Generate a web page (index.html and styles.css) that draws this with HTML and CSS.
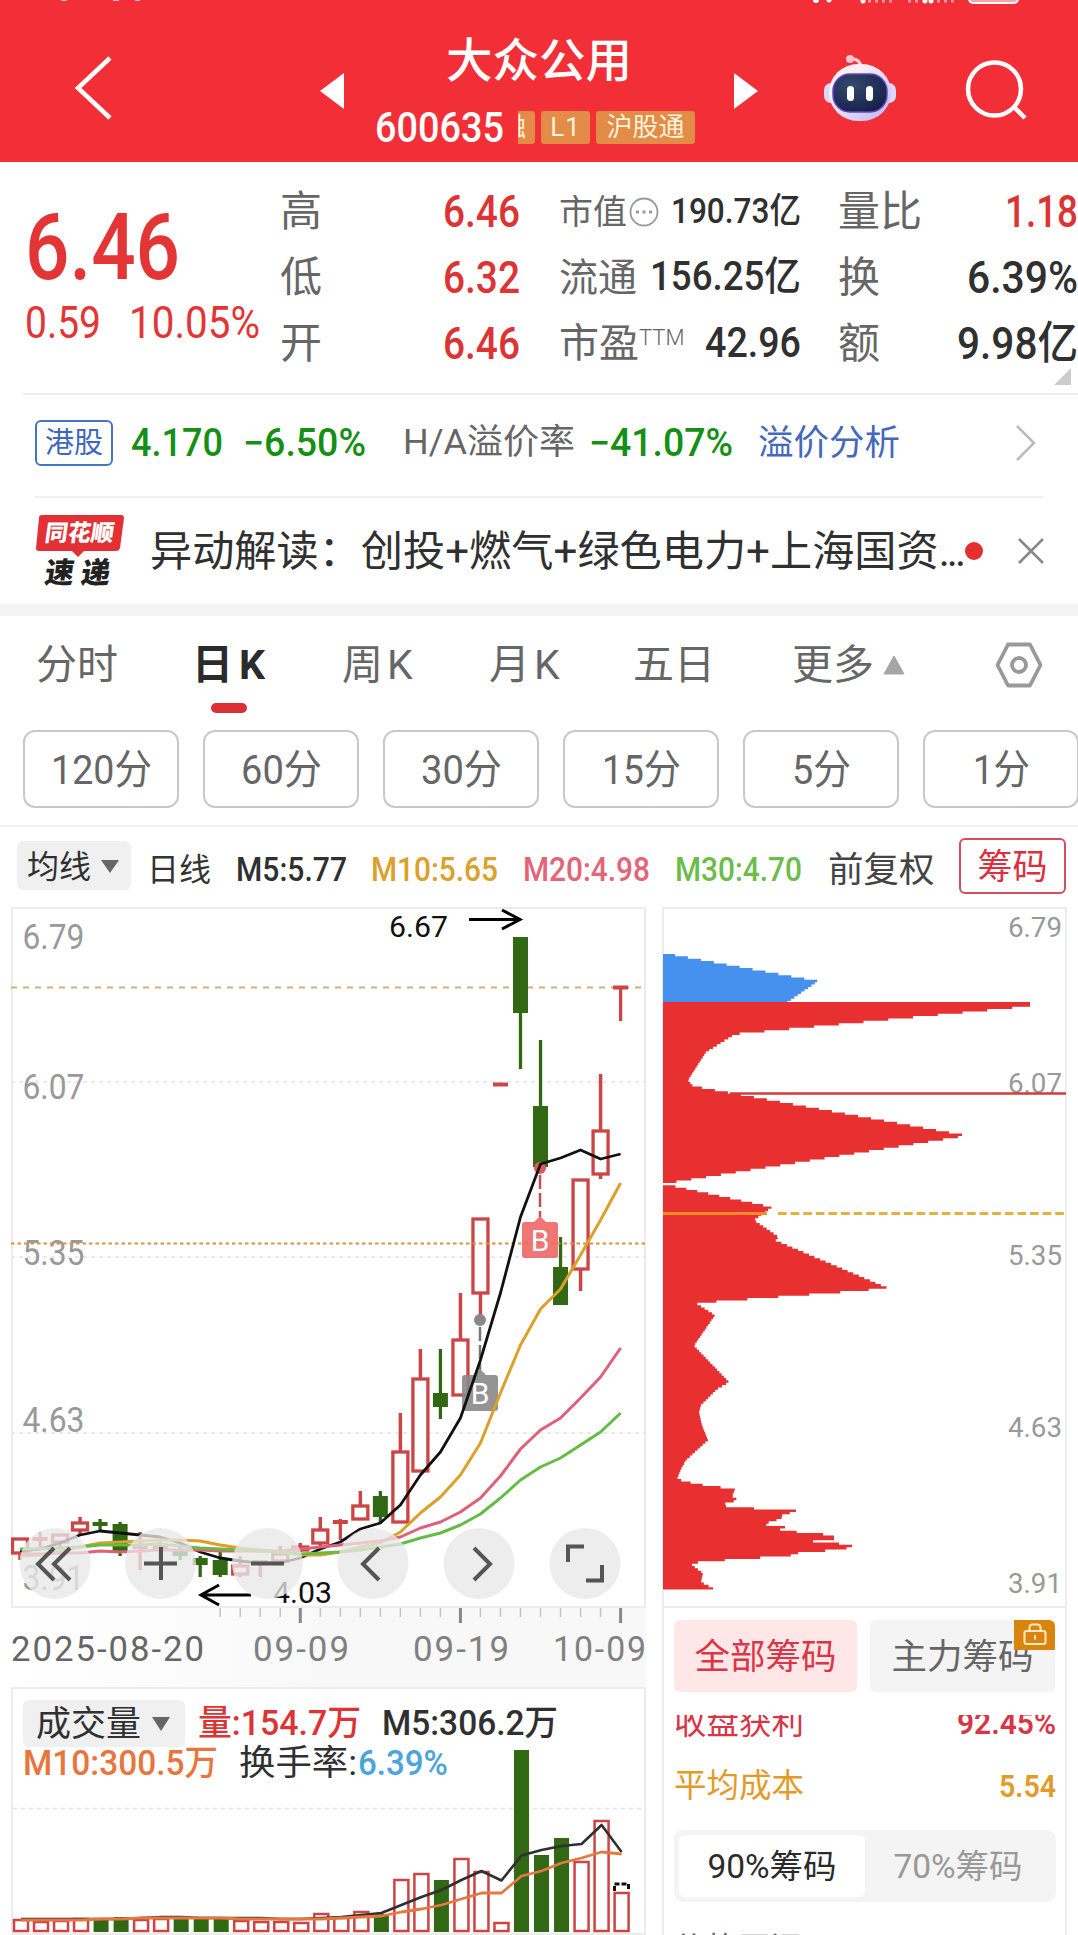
FILE: index.html
```html
<!DOCTYPE html>
<html lang="zh-CN">
<head>
<meta charset="utf-8">
<title>大众公用 600635</title>
<link rel="stylesheet" href="styles.css">
</head>
<body>

  <header class="topbar">
    <svg class="status" width="1078" height="6" viewBox="0 0 1078 6">
      <path d="M61 0h6M113 0h6M135 0h5" stroke="#ffb9bc" stroke-width="2"/>
      <circle cx="816" cy="0" r="3" fill="#fff"/><circle cx="829" cy="0" r="2.5" fill="#fff"/>
      <circle cx="863" cy="1" r="2.5" fill="#fff"/><circle cx="925" cy="1" r="2.5" fill="#fff"/><circle cx="931" cy="1" r="2.5" fill="#fff"/>
      <path d="M868 1h24M908 1h12M937 1h20" stroke="#f99" stroke-width="3" stroke-dasharray="3 4"/>
      <rect x="969" y="-12" width="49" height="15" rx="4" fill="#f9a5a8" stroke="#fff" stroke-width="2"/>
    </svg>
    <svg class="back" width="40" height="68" viewBox="0 0 40 68"><path d="M36 4L4 34l32 30" fill="none" stroke="#fff" stroke-width="4.5"/></svg>
    <svg class="prev" width="24" height="36" viewBox="0 0 24 36"><path d="M24 0v36L0 18z" fill="#fff"/></svg>
    <div class="title">
      <h1>大众公用</h1>
      <div class="code">
        <b class="fit" data-w="129">600635</b>
        <span class="tag cut"><i>融</i></span>
        <span class="tag l1">L1</span>
        <span class="tag hgt">沪股通</span>
      </div>
    </div>
    <svg class="next" width="24" height="36" viewBox="0 0 24 36"><path d="M0 0v36l24-18z" fill="#fff"/></svg>
    <svg class="robot" width="74" height="70" viewBox="0 0 74 70">
      <defs>
        <linearGradient id="shell" x1="0" y1="0" x2="1" y2="1"><stop offset="0.3" stop-color="#fbeef6"/><stop offset="1" stop-color="#b9b5f2"/></linearGradient>
        <radialGradient id="face" cx="0.35" cy="0.3" r="0.8"><stop offset="0" stop-color="#35486e"/><stop offset="1" stop-color="#141f48"/></radialGradient>
      </defs>
      <path d="M27 6q10-1 11 8" fill="none" stroke="#fbd3dc" stroke-width="3"/>
      <circle cx="27" cy="6" r="4" fill="#fbc3cb"/>
      <rect x="1" y="30" width="72" height="20" rx="7" fill="#dcd6f7"/>
      <rect x="6" y="11" width="62" height="57" rx="29" fill="url(#shell)"/>
      <rect x="10" y="21" width="54" height="38" rx="17" fill="url(#face)" stroke="#6345c4" stroke-width="1.5"/>
      <rect x="24" y="33" width="7" height="15" rx="3.5" fill="#fff"/>
      <rect x="43" y="33" width="7" height="15" rx="3.5" fill="#fff"/>
    </svg>
    <svg class="search" width="64" height="64" viewBox="0 0 64 64"><circle cx="30.500" cy="31" r="26.500" fill="none" stroke="#fff" stroke-width="4.500"/><path d="M50 49l11 11" stroke="#fff" stroke-width="4.500"/></svg>
  </header>

  <section class="stats">
    <div class="price">
      <div class="big"><span class="fit" data-w="155">6.46</span></div>
      <div class="change"><span class="fit" data-w="76">0.59</span><span class="fit" data-w="131">10.05%</span></div>
    </div>
    <div class="lab">高</div><div class="val red"><span class="fit" data-w="77">6.46</span></div>
    <div class="lab cap">市值<svg width="30" height="30" viewBox="0 0 30 30"><circle cx="15" cy="15" r="13.500" fill="none" stroke="#999" stroke-width="1.800"/><path d="M7 15h3M13.500 15h3M20 15h3" stroke="#999" stroke-width="3"/></svg></div>
    <div class="val v35"><span class="fit" data-w="130">190.73亿</span></div>
    <div class="lab">量比</div><div class="val red"><span class="fit" data-w="73">1.18</span></div>

    <div class="lab">低</div><div class="val red"><span class="fit" data-w="77">6.32</span></div>
    <div class="lab l39">流通</div><div class="val v40"><span class="fit" data-w="151">156.25亿</span></div>
    <div class="lab">换</div><div class="val"><span class="fit" data-w="111">6.39%</span></div>

    <div class="lab">开</div><div class="val red"><span class="fit" data-w="77">6.46</span></div>
    <div class="lab l40">市盈<sup>TTM</sup></div><div class="val v42"><span class="fit" data-w="96">42.96</span></div>
    <div class="lab">额</div><div class="val"><span class="fit" data-w="121">9.98亿</span></div>
    <svg class="corner" width="17" height="17" viewBox="0 0 17 17"><path d="M17 0v17H0z" fill="#ccc"/></svg>
  </section>

  <section class="hk">
    <span class="hk-tag">港股</span>
    <b class="fit" data-w="92">4.170</b>
    <b class="fit" data-w="123">−6.50%</b>
    <span class="ha fit" data-w="172">H/A溢价率</span>
    <b class="fit" data-w="144">−41.07%</b>
    <span class="link">溢价分析</span>
    <svg width="22" height="38" viewBox="0 0 22 38"><path d="M2 2l17 17L2 36" fill="none" stroke="#bbb" stroke-width="2.500"/></svg>
  </section>

  <section class="news">
    <div class="logo">
      <svg width="90" height="44" viewBox="0 0 90 44"><path d="M7 1h79q3 0 3 3l-4 30q-1 3-4 3H49l-6 6-6-6H4q-3 0-3-3L4 4q0-3 3-3z" fill="#e23035"/></svg>
      <span class="logo-a">同花顺</span>
      <span class="logo-b">速 递</span>
    </div>
    <p><span class="fit" data-w="813">异动解读：创投+燃气+绿色电力+上海国资<i class="dots">...</i></span></p>
    <i class="dot"></i>
    <svg width="26" height="26" viewBox="0 0 26 26"><path d="M1 1l24 24M25 1L1 25" stroke="#888" stroke-width="2.500"/></svg>
  </section>

  <nav class="tabs">
    <span>分时</span>
    <span class="active">日<em>K</em></span>
    <span>周<em>K</em></span>
    <span>月<em>K</em></span>
    <span>五日</span>
    <span class="more">更多<svg width="22" height="20" viewBox="0 0 22 20"><path d="M11 1l10 18H1z" fill="#a5a5a5" stroke="#a5a5a5"/></svg></span>
    <svg width="48" height="46" viewBox="0 0 48 46"><path d="M13 2.500h22L45.500 23 35 43.500H13L2.500 23z" fill="none" stroke="#999" stroke-width="3.800" stroke-linejoin="round"/><circle cx="24" cy="23" r="7" fill="none" stroke="#999" stroke-width="3.800"/></svg>
  </nav>

  <div class="minutes">
    <span><i class="fit" data-w="101">120分</i></span>
    <span><i class="fit" data-w="81">60分</i></span>
    <span><i class="fit" data-w="81">30分</i></span>
    <span><i class="fit" data-w="79">15分</i></span>
    <span><i class="fit" data-w="59">5分</i></span>
    <span><i class="fit" data-w="57">1分</i></span>
  </div>

  <div class="ma">
    <span class="pick">均线<svg width="18" height="13" viewBox="0 0 18 13"><path d="M0 0h18L9 13z" fill="#666"/></svg></span>
    <span class="day">日线</span>
    <b class="fit" data-w="111">M5:5.77</b>
    <b class="fit c10" data-w="127">M10:5.65</b>
    <b class="fit c20" data-w="127">M20:4.98</b>
    <b class="fit c30" data-w="127">M30:4.70</b>
    <span class="fq">前复权</span>
    <span class="chip-btn">筹码</span>
  </div>

  <main class="board">
    <div class="left">
      <svg id="kline" width="635" height="701" viewBox="12 907 635 701"></svg>
      <div class="axis">
        <svg id="ticks" width="635" height="18" viewBox="12 1608 635 18"></svg>
        <div class="dates">
          <span class="fit first" data-w="195">2025-08-20</span>
          <span class="fit" data-w="98">09-09</span>
          <span class="fit" data-w="98">09-19</span>
          <span class="fit" data-w="95">10-09</span>
        </div>
      </div>
      <div class="volume">
        <div class="vol-head">
          <span class="pick">成交量<svg width="18" height="14" viewBox="0 0 18 14"><path d="M0 0h18L9 14z" fill="#666"/></svg></span>
          <b class="fit red" data-w="163">量:154.7万</b>
          <b class="fit" data-w="176">M5:306.2万</b>
        </div>
        <div class="vol-head second">
          <b class="fit vm10" data-w="195">M10:300.5万</b>
          <span class="fit" data-w="118">换手率:</span>
          <b class="fit blue" data-w="90">6.39%</b>
        </div>
        <svg id="vols" width="633" height="155" viewBox="13 1779 633 155"></svg>
      </div>
    </div>

    <div class="right">
      <svg id="chips" width="405" height="701" viewBox="662 907 405 701"></svg>
      <div class="chip-tabs">
        <span class="on">全部筹码</span>
        <span>主力筹码
          <i class="lock"><svg width="24" height="23" viewBox="0 0 24 23"><rect x="1.500" y="8" width="21" height="13" rx="2" fill="none" stroke="#ffe9c0" stroke-width="2"/><path d="M6.500 8V4.500q0-3 3-3h5q3 0 3 3V8M12 12v4.500" fill="none" stroke="#ffe9c0" stroke-width="2"/></svg></i>
        </span>
      </div>
      <div class="scroll">
        <div class="line profit"><span>收盘获利</span><b class="fit" data-w="99">92.45%</b></div>
        <div class="line cost"><span>平均成本</span><b class="fit" data-w="57">5.54</b></div>
        <div class="toggle"><span class="on">90%筹码</span><span>70%筹码</span></div>
        <div class="range">价格区间</div>
      </div>
    </div>
  </main>

  <script src="script.js"></script>
</body>
</html>
```
FILE: styles.css
```css
* {
  box-sizing: border-box;
}

body {
  margin: 0;
  width: 1078px;
  height: 1935px;
  overflow: hidden;
  background: #fff;
  color: #303030;
  font-family: Roboto, "Noto Sans CJK SC", sans-serif;
  line-height: 1;
}

svg {
  display: block;
  flex: none;
}

i, em {
  font-style: normal;
}

b {
  font-weight: 500;
}

/* condensed figures, squeezed to data-w by script.js */
.fit {
  display: inline-block;
  white-space: nowrap;
  transform-origin: left center;
}

.red { color: #dc3434; }

/* header */
.topbar {
  position: relative;
  height: 162px;
  background: #f22f37;
  color: #fff;
  display: flex;
  align-items: flex-start;
}
.status { position: absolute; top: 0; left: 0; }
.back { margin: 54px 0 0 74px; }
.prev { margin: 73px 0 0 206px; }
.title { width: 390px; padding-top: 38px; }
.next { margin-top: 73px; }
.robot { margin: 53px 0 0 65px; }
.search { margin: 58px 0 0 67px; }

.title h1 {
  margin: 0;
  font-size: 46.5px;
  font-weight: 500;
  text-align: center;
}
.code {
  display: flex;
  align-items: center;
  height: 36px;
  margin: 25px 0 0 31px;
  font-size: 42px;
}
.tag {
  height: 33px;
  border-radius: 3px;
  background: #e28c47;
  color: #fff2dc;
  font-size: 26px;
  line-height: 32px;
  text-align: center;
  overflow: hidden;
}
.cut { width: 17px; margin-left: 14px; border-radius: 0 3px 3px 0; }
.cut i { float: right; margin-right: 9px; }
.l1 { width: 49px; margin-left: 6px; letter-spacing: 1px; }
.hgt { width: 99px; margin-left: 6px; }

/* quote numbers */
.stats {
  position: relative;
  display: grid;
  grid-template-columns: 255px 79px 161px 166px 115px 140px 137px;
  grid-template-rows: repeat(3, 66px);
  align-items: center;
  height: 232px;
  padding: 16px 0 0 25px;
}
.stats::after {
  content: "";
  position: absolute;
  left: 23px;
  right: 0;
  bottom: -1px;
  height: 2px;
  background: #eee;
}
.price {
  grid-row: 1 / 4;
  align-self: start;
  color: #e33535;
}
.big { padding-top: 23px; font-size: 93px; font-weight: 500; }
.change { display: flex; gap: 28px; padding-top: 7px; font-size: 44px; }
.lab {
  display: flex;
  align-items: center;
  color: #666;
  font-size: 42px;
  white-space: nowrap;
  padding-top: 2px;
}
.lab:nth-child(6n+4) { padding-left: 39px; }
.lab:nth-child(6n) { padding-left: 37px; }
.cap { font-size: 34px; }
.cap svg { margin-left: 2px; }
.l39 { font-size: 39px; }
.l40 { font-size: 40px; }
.lab sup { font-size: 22px; font-weight: 300; margin-bottom: 12px; }
.val {
  display: flex;
  justify-content: flex-end;
  font-size: 45px;
  font-weight: 500;
}
.v35 { font-size: 35px; }
.v40 { font-size: 40px; }
.v42 { font-size: 42px; }
.corner { position: absolute; right: 7px; bottom: 9px; }

/* H share */
.hk {
  display: grid;
  grid-template-columns: 96px 112px 160px 186px 169px 257px 22px;
  align-items: center;
  height: 104px;
  margin: 0 35px;
  padding-bottom: 5px;
  border-bottom: 2px solid #f0f0f0;
  color: #159015;
  font-size: 38px;
}
.hk-tag {
  width: 78px;
  height: 46px;
  border: 2px solid #4474c8;
  border-radius: 6px;
  color: #3c68be;
  font-size: 29px;
  line-height: 43px;
  text-align: center;
}
.ha { color: #666; font-size: 35px; }
.link { color: #4468bc; font-size: 35.5px; padding-top: 2px; }

/* news */
.news {
  display: flex;
  align-items: center;
  height: 106px;
  padding-left: 35px;
}
.logo { position: relative; width: 90px; height: 74px; margin-right: 25px; }
.logo-a, .logo-b {
  position: absolute;
  font-weight: 900;
  white-space: nowrap;
  transform: skewX(-8deg);
}
.logo-a { left: 10px; top: 8px; color: #fff; font-size: 23px; }
.logo-b { left: 10px; top: 45px; color: #222; font-size: 29px; }
.news p { margin: 0; width: 815px; padding-top: 2px; font-size: 42px; }
.dots { letter-spacing: -3px; }
.dot { width: 18px; height: 18px; border-radius: 50%; background: #e52f2f; }
.news > svg { margin-left: 35px; }

/* period tabs */
.tabs {
  display: grid;
  grid-template-columns: 156px 150px 147px 144px 159px 203px 48px;
  align-items: center;
  height: 112px;
  padding: 0 0 2px 36px;
  border-top: 12px solid #f4f4f4;
  color: #666;
  font-size: 41px;
}
.tabs em { margin-left: 4px; }
.active {
  position: relative;
  color: #2b2b2b;
  font-weight: 700;
}
.active em { margin-left: 6px; }
.active::after {
  content: "";
  position: absolute;
  left: 19px;
  top: 58px;
  width: 36px;
  height: 10px;
  border-radius: 5px;
  background: #dd3035;
}
.more { display: flex; align-items: center; gap: 9px; }

.minutes {
  display: flex;
  gap: 24px;
  height: 111px;
  padding: 14px 0 0 23px;
  border-bottom: 2px solid #f0f0f0;
}
.minutes span {
  flex: none;
  display: flex;
  align-items: center;
  justify-content: center;
  width: 156px;
  height: 78px;
  padding-top: 2px;
  border: 2px solid #c8c8c8;
  border-radius: 12px;
  color: #666;
  font-size: 41px;
}

/* moving averages */
.ma {
  display: grid;
  grid-template-columns: 130px 89px 135px 152px 152px 153px 131px 107px;
  align-items: center;
  height: 80px;
  padding: 2px 0 0 17px;
  font-size: 33px;
}
.ma > b { padding-top: 3px; }
.pick {
  display: flex;
  align-items: center;
  background: #f0f0f0;
  border-radius: 6px;
}
.ma .pick { width: 114px; height: 49px; padding: 2px 0 0 10px; gap: 10px; font-size: 32px; margin-top: -5px; }
.day { font-size: 32px; color: #333; padding-top: 3px; }
.c10 { color: #dca02c; }
.c20 { color: #e46478; }
.c30 { color: #6cbc4c; }
.fq { font-size: 35.5px; color: #444; padding-top: 6px; }
.chip-btn {
  height: 56px;
  margin-top: -5px;
  border: 2px solid #d05060;
  border-radius: 6px;
  color: #dc3040;
  font-size: 35px;
  line-height: 56px;
  text-align: center;
}

/* charts */
.board {
  display: flex;
  gap: 16px;
  height: 1028px;
  padding-left: 11px;
}
.left { width: 635px; }
.right {
  width: 405px;
  height: 1028px;
  border: 2px solid #ececec;
  border-width: 0 2px;
}
.right > svg { margin-left: -2px; }
.axis {
  height: 79px;
  background: linear-gradient(to right, #fff, #f8f8f8 50%);
}
.dates {
  display: grid;
  grid-template-columns: 242px 160px 140px 95px;
  padding-top: 6px;
  color: #808080;
  font-size: 35px;
  letter-spacing: 2px;
}
.dates .first { color: #666; }
.volume {
  height: 248px;
  border: 2px solid #ececec;
}
.vol-head {
  display: flex;
  align-items: center;
  height: 47px;
  margin: 10px 0 0 10px;
  padding-top: 1px;
  font-size: 35px;
}
.vol-head .pick { width: 162px; height: 47px; padding: 2px 0 0 13px; gap: 11px; font-size: 35px; margin-right: 13px; }
.vol-head b + b { margin-left: 21px; }
.second { height: 35px; margin-top: -1px; gap: 21px; }
.second .blue { margin-left: -20px; }
.vm10 { color: #e8763c; }
.blue { color: #4ca4dc; }
#vols { overflow: visible; margin-top: -2px; }

.chip-tabs {
  display: flex;
  gap: 13px;
  padding: 12px 0 0 10px;
}
.chip-tabs span {
  position: relative;
  width: 185px;
  height: 72px;
  border-radius: 6px;
  background: #f4f4f4;
  color: #666;
  font-size: 35.5px;
  line-height: 74px;
  text-align: center;
}
.chip-tabs .on { width: 183px; background: #ffe7e8; color: #dc3545; }
.lock {
  position: absolute;
  right: 0;
  top: 0;
  width: 41px;
  height: 30px;
  padding: 3px 0 0 9px;
  border-radius: 0 6px 0 0;
  background: #d9840f;
}
.scroll {
  height: 220px;
  margin-top: 23px;
  padding: 0 9px 0 10px;
  overflow: hidden;
}
.line {
  display: flex;
  justify-content: space-between;
  align-items: center;
  height: 32px;
  font-size: 32.5px;
}
.line b { font-size: 32px; font-weight: 600; }
.profit { color: #d83545; margin-top: -8px; }
.cost { color: #e49a28; margin-top: 31px; }
.toggle {
  display: flex;
  height: 72px;
  margin-top: 28px;
  padding: 5px;
  border-radius: 9px;
  background: #f4f4f4;
  color: #999;
  font-size: 33.5px;
  line-height: 64px;
  text-align: center;
}
.toggle span { flex: 1; }
.toggle .on { background: #fff; border-radius: 6px; color: #2b2b2b; }
.range { margin-top: 31px; color: #666; font-size: 32px; }

/* chart text */
.scale { fill: #999; font-size: 35px; }
.scale.small { font-size: 28px; }
.mark { fill: #111; font-size: 29px; }
.btn { fill: #e8e8e8; fill-opacity: 0.78; }
.ico { fill: none; stroke: #555; stroke-width: 4; }
```
FILE: script.js
```js
// squeeze text to its data-w width
document.querySelectorAll('.fit').forEach(function (el) {
  const w = Number(el.dataset.w);
  el.style.width = 'max-content';
  const full = el.getBoundingClientRect().width;
  el.style.transform = `scaleX(${w / full})`;
  el.style.marginRight = (w - full) + 'px';
});

const RED = '#cc4444';
const GREEN = '#306814';
const X = i => 21 + i * 20.02;

// [type, high, top, bottom, low]  r = rising, g = falling, t / d = flat
const candles = [
  ['r', 1539, 1539, 1553, 1560], ['t', 1532, 1539, 1539, 1547], ['r', 1535, 1535, 1542, 1548],
  ['r', 1517, 1523, 1530, 1535], ['d', 1519, 1524, 1524, 1530], ['g', 1522, 1524, 1551, 1556],
  ['t', 1532, 1547, 1547, 1570], ['t', 1540, 1547, 1547, 1560], ['g', 1546, 1551, 1556, 1560],
  ['g', 1556, 1558, 1565, 1577], ['g', 1552, 1560, 1575, 1577], ['r', 1556, 1566, 1574, 1577],
  ['t', 1561, 1562, 1562, 1577], ['r', 1546, 1554, 1561, 1564], ['r', 1543, 1547, 1550, 1552],
  ['r', 1517, 1530, 1543, 1549], ['t', 1519, 1522, 1522, 1540], ['r', 1491, 1506, 1519, 1519],
  ['g', 1491, 1496, 1517, 1523], ['r', 1413, 1452, 1522, 1523], ['r', 1349, 1379, 1471, 1471],
  ['g', 1349, 1393, 1407, 1419], ['r', 1293, 1340, 1395, 1395], ['r', 1219, 1219, 1293, 1320],
  ['t', 1084, 1084.5, 1084.5, 1085], ['g', 937, 937, 1013, 1069], ['g', 1040, 1106, 1167, 1167],
  ['g', 1237, 1267, 1305, 1305], ['r', 1180, 1180, 1269, 1291], ['r', 1074, 1131, 1174, 1179],
  ['t', 987, 987.5, 987.5, 1021]
];

const m5 = [1551, 1549, 1543, 1535, 1531, 1533, 1535, 1537, 1543, 1552, 1558, 1561, 1563, 1563, 1558, 1549, 1542, 1529, 1523, 1505, 1475, 1452, 1418, 1360, 1293, 1217, 1164, 1158, 1150, 1159, 1154];
const m10 = [1556, 1555, 1551, 1547, 1543, 1542, 1541, 1540, 1540, 1541, 1545, 1548, 1550, 1552, 1555, 1555, 1552, 1547, 1543, 1532, 1513, 1497, 1475, 1443, 1393, 1345, 1309, 1289, 1255, 1220, 1183];
const m20 = [1554, 1554, 1553, 1553, 1551, 1552, 1551, 1550, 1550, 1550, 1551, 1551, 1551, 1551, 1549, 1547, 1545, 1543, 1541, 1537, 1528, 1522, 1512, 1498, 1476, 1449, 1430, 1418, 1398, 1377, 1348];
const m30 = [1549, 1549, 1548, 1547, 1545, 1545, 1545, 1544, 1546, 1548, 1549, 1550, 1551, 1552, 1554, 1553, 1552, 1550, 1547, 1544, 1538, 1533, 1525, 1514, 1498, 1480, 1467, 1458, 1445, 1432, 1413];

function line(data, color, width) {
  const pts = data.map((y, i) => `${X(i)},${y}`).join(' ');
  return `<polyline points="${pts}" fill="none" stroke="${color}" stroke-width="${width}" stroke-linejoin="round"/>`;
}

function hline(x1, x2, y, color, width, dash) {
  return `<path d="M${x1} ${y}H${x2}" stroke="${color}" stroke-width="${width}" stroke-dasharray="${dash || 'none'}"/>`;
}

function label(x, y, text, w, cls) {
  return `<text class="${cls}" x="${x}" y="${y}" textLength="${w}" lengthAdjust="spacingAndGlyphs">${text}</text>`;
}

function candle(c, i) {
  const [type, hi, top, bot, lo] = c;
  const x = X(i);
  const color = type === 'g' || type === 'd' ? GREEN : RED;
  let s = '';
  if (type === 'r') {
    s += `<path d="M${x} ${hi}V${top}M${x} ${bot}V${lo}" stroke="${color}" stroke-width="3.5"/>`;
    s += `<rect x="${x - 7.5}" y="${top}" width="15" height="${bot - top}" fill="#fff" stroke="${color}" stroke-width="3.3"/>`;
  } else {
    s += `<path d="M${x} ${hi}V${lo}" stroke="${color}" stroke-width="3.3"/>`;
    s += type === 'g'
      ? `<rect x="${x - 7.5}" y="${top}" width="15" height="${bot - top}" fill="${color}"/>`
      : `<path d="M${x - 7.5} ${top}h15" stroke="${color}" stroke-width="4"/>`;
  }
  return s;
}

function flag(x, y, color) {
  return `<path d="M${x - 15} ${y}h9l6-6 6 6h9q3 0 3 3v30q0 3-3 3h-30q-3 0-3-3v-30q0-3 3-3z" fill="${color}" fill-opacity="0.9"/>` +
    `<text x="${x}" y="${y + 29}" fill="#fff" font-size="30" text-anchor="middle">B</text>`;
}

// main chart
let k = '<rect x="13" y="908" width="633" height="699" fill="none" stroke="#ececec" stroke-width="2"/>';
k += [1082, 1257, 1433].map(y => hline(12, 647, y, '#e4e4e4', 1.5, '4 4')).join('');
k += hline(12, 642, 987.5, '#cdb27c', 2, '6 6');
k += label(23.5, 949, '6.79', 62, 'scale') + label(23.5, 1099, '6.07', 62, 'scale') + label(23.5, 1265, '5.35', 62, 'scale') +
  label(23.5, 1432, '4.63', 62, 'scale') + label(23.5, 1590, '3.91', 62, 'scale');
k += candles.map(candle).join('');
k += hline(12, 647, 1243.5, '#dc9040', 2, '3.5 3');
k += '<circle cx="541" cy="1168" r="6" fill="#e05a5a"/><path d="M541 1175V1217" stroke="#c05050" stroke-width="2.5" stroke-dasharray="14 4"/>';
k += '<circle cx="481" cy="1320" r="6" fill="#888"/><path d="M481 1327V1370" stroke="#777" stroke-width="2.5" stroke-dasharray="14 4"/>';
k += flag(541, 1222, '#ee6666') + flag(481, 1375, '#888');
k += line(m5, '#111', 2.8) + line(m10, '#dca028', 3) + line(m20, '#e06078', 3) + line(m30, '#64bc44', 3);
k += label(390, 936.5, '6.67', 59, 'mark') + label(274, 1603, '4.03', 59, 'mark');
k += '<path d="M470 919.5H520M503 910l18 9.500-18 9.500M252 1595H203M220 1585l-18 10 18 10" fill="none" stroke="#000" stroke-width="3"/>';
k += [56, 161.5, 268.5, 374, 480, 586].map(x => `<circle class="btn" cx="${x}" cy="1563.5" r="35.500"/>`).join('');
k += '<path class="ico" d="M55 1548l-16 16 16 16M71 1548l-16 16 16 16M145 1563.500h33M162 1547v33M252 1563.500h33M380 1548l-16 16 16 16M475 1548l16 16-16 16M569 1562v-15.500h16M603 1565v15.500h-16"/>';
document.getElementById('kline').innerHTML = k;

// time ticks
let t = '';
for (let i = 10; i <= 30; i++) {
  const major = i === 14 || i === 22 || i === 30;
  t += `<path d="M${X(i)} 1608v${major ? 15 : 9}" stroke="${major ? '#888' : '#c4c4c4'}" stroke-width="${major ? 3 : 1.5}"/>`;
}
document.getElementById('ticks').innerHTML = t;

// volume
const vol = [1920, 1922, 1921, 1919, 1921, 1918, 1920, 1919, 1920, 1918, 1920, 1921, 1922, 1922, 1923, 1914, 1918, 1912, 1915, 1880, 1874, 1881, 1859, 1872, 1923, 1751, 1856, 1839, 1862, 1821, 1893];
const down = [4, 5, 8, 9, 10, 18, 21, 25, 26, 27];
const v5 = [1920, 1920, 1920, 1920, 1920, 1920, 1919, 1918, 1918, 1919, 1919, 1919, 1919, 1920, 1920, 1919, 1918, 1916, 1914, 1906, 1898, 1891, 1881, 1872, 1881.5, 1856.5, 1851, 1847, 1845, 1826, 1853];
const v10 = [1921, 1921, 1921, 1921, 1920, 1920, 1919, 1919, 1919, 1919, 1919, 1920, 1920, 1920, 1920, 1920, 1919, 1918, 1917, 1913, 1910, 1906, 1900, 1894, 1894, 1877, 1872, 1864, 1859, 1853, 1855];

let v = hline(13, 646, 1809.5, '#e4e4e4', 1.5, '4 4');
v += vol.map(function (y, i) {
  const x = X(i);
  if (down.includes(i)) return `<rect x="${x - 7.5}" y="${y}" width="15" height="${1933 - y}" fill="${GREEN}"/>`;
  return `<rect x="${x - 7}" y="${y + 1}" width="14" height="${1931 - y}" fill="#fff" stroke="${RED}" stroke-width="2.5"/>`;
}).join('');
v += '<path d="M614.500 1892v-7h14v7" fill="none" stroke="#111" stroke-width="3" stroke-dasharray="5 2"/>';
v += line(v5, '#303030', 2.6) + line(v10, '#e47840', 2.8);
document.getElementById('vols').innerHTML = v;

// chip distribution, drawn as rows
const blue = [[675, 954], [818, 980], [786, 1002]];
const chips = [[1030, 1002], [1030, 1005], [735, 1033], [706, 1051], [688, 1079], [693, 1085], [967, 1134.5], [674, 1181], [663, 1182], [663, 1184],
  [674, 1185], [772, 1206], [754, 1219], [779, 1236], [775, 1239], [888, 1287], [854, 1290], [696, 1302], [715, 1314], [694, 1344.5], [729, 1381],
  [717, 1388], [701, 1404], [699, 1411], [702, 1424], [708, 1439], [686, 1459], [681, 1468], [677, 1478], [697, 1483], [735, 1488], [732, 1495],
  [738, 1499], [720, 1504], [740, 1507], [796, 1508], [796, 1510], [780, 1515], [783, 1518], [770, 1520], [766, 1524], [785, 1525], [785, 1527], [778, 1529], [810, 1532],
  [834, 1534], [834, 1539], [812, 1540], [826, 1542], [852, 1543], [852, 1546], [843, 1548], [797, 1552], [794, 1554], [755, 1557], [724, 1559], [690, 1562],
  [696, 1567], [703, 1572], [701, 1581], [713, 1587], [713, 1588.5]];

function rows(data, color) {
  const step = 2.35;
  let d = `M663 ${data[0][1]}`;
  let i = 0;
  for (let y = data[0][1]; y < data[data.length - 1][1]; y += step) {
    while (i < data.length - 2 && data[i + 1][1] < y) i++;
    const [xa, ya] = data[i];
    const [xb, yb] = data[i + 1];
    const x = xa + (xb - xa) * (y - ya) / (yb - ya);
    d += `H${x.toFixed(1)}v${step}`;
  }
  return `<path d="${d}H663z" fill="${color}"/>`;
}

let c = '<path d="M662 908H1067M662 1607H1067" stroke="#ececec" stroke-width="2"/>';
c += rows(blue, '#4690ee') + rows(chips, '#e83030');
[['6.79', 937], ['6.07', 1093], ['5.35', 1265], ['4.63', 1437], ['3.91', 1593]].forEach(function (p) {
  c += label(1008, p[1], p[0], 54, 'scale small');
});
c += hline(730, 1066, 1093.5, '#d43a3a', 2.5);
c += hline(663, 767, 1213.5, '#f58a28', 3) + hline(778, 1066, 1213.5, '#e4b040', 3, '8.7 3.9');
document.getElementById('chips').innerHTML = c;
```
